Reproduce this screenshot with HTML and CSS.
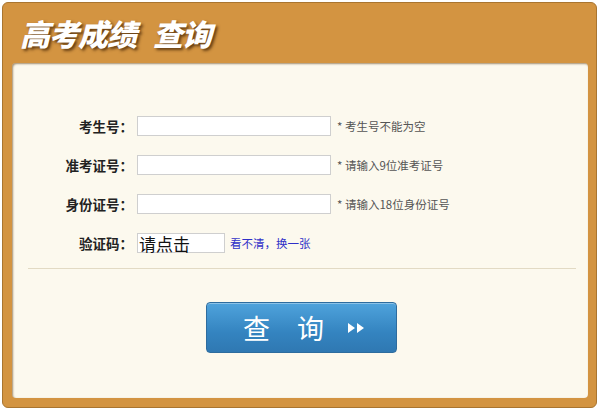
FILE: index.html
```html
<!doctype html>
<html lang="zh-CN">
<head>
  <meta charset="utf-8">
  <title>高考成绩查询</title>
  <link rel="stylesheet" href="styles.css">
</head>
<body>
  <!-- outer orange frame -->
  <div class="frame">
    <h1 class="title">高考成绩<span class="gap"></span>查询</h1>

    <div class="panel">
      <form class="query-form">
        <div class="row">
          <label class="label">考生号：</label>
          <input class="field" type="text">
          <span class="hint">* 考生号不能为空</span>
        </div>
        <div class="row">
          <label class="label">准考证号：</label>
          <input class="field" type="text">
          <span class="hint">* 请输入9位准考证号</span>
        </div>
        <div class="row">
          <label class="label">身份证号：</label>
          <input class="field" type="text">
          <span class="hint">* 请输入18位身份证号</span>
        </div>
        <div class="row">
          <label class="label">验证码：</label>
          <div class="captcha">请点击</div>
          <a class="refresh" href="#">看不清，换一张</a>
        </div>
      </form>

      <hr class="divider">

      <div class="actions">
        <button class="submit" type="button">
          <span>查</span><span>询</span>
          <svg class="arrows" width="20" height="12" viewBox="0 0 20 12">
            <path d="M2 1 L9 6 L2 11 Z" fill="#fff"/>
            <path d="M11 1 L18 6 L11 11 Z" fill="#fff"/>
          </svg>
        </button>
      </div>
    </div>
  </div>
</body>
</html>
```

FILE: styles.css
```css
/*----------------------------------------------
 * BASE
 *----------------------------------------------*/
html, body {
  margin: 0;
  padding: 0;
  background: #fff;
  font-family: "Noto Sans CJK SC", "Noto Sans", sans-serif;
}

/*----------------------------------------------
 * FRAME + HEADER
 *----------------------------------------------*/
.frame {
  margin: 2px 0 0 2px;
  width: 595px;
  height: 406px;
  box-sizing: border-box;
  background: #d39441;
  border: 1px solid #a97530;
  border-radius: 6px;
  padding: 0 8px 9px 9px;
  display: flex;
  flex-direction: column;
}

.title {
  margin: 0;
  height: 60px;
  padding-left: 8px;
  display: flex;
  align-items: center;
  color: #fff;
  font-size: 30px;
  font-weight: 900;
  font-style: italic;
  letter-spacing: -1px;
  text-shadow: 2px 2px 3px rgba(60, 30, 0, 0.75);
}

.title .gap {
  display: inline-block;
  width: 17px;
}

/*----------------------------------------------
 * PANEL
 *----------------------------------------------*/
.panel {
  flex: 1;
  background: #fcf9ee;
  border-radius: 4px;
  box-shadow: inset 1px 1px 2px rgba(90, 55, 10, 0.55);
  padding-top: 53px;
}

.query-form {
  display: flex;
  flex-direction: column;
  gap: 19px;
}

.row {
  display: flex;
  align-items: center;
  height: 20px;
}

.label {
  width: 121px;
  text-align: right;
  font-size: 13.5px;
  font-weight: 700;
  color: #222;
  margin-right: 4px;
}

.field {
  width: 194px;
  height: 20px;
  box-sizing: border-box;
  margin: 0;
  border: 1px solid #cfcfcf;
  background: #fff;
}

.hint {
  margin-left: 6px;
  font-size: 11.5px;
  color: #555;
}

.captcha {
  width: 88px;
  height: 20px;
  box-sizing: border-box;
  border: 1px solid #cfcfcf;
  background: #fff;
  font-size: 17px;
  line-height: 19px;
  color: #111;
  padding-left: 1px;
  white-space: nowrap;
}

.refresh {
  margin-left: 5px;
  font-size: 11.5px;
  color: #3030c8;
  text-decoration: none;
}

.divider {
  margin: 15px 12px 0 16px;
  border: 0;
  border-top: 1px solid #e2dac4;
}

/*----------------------------------------------
 * BUTTON
 *----------------------------------------------*/
.actions {
  display: flex;
  justify-content: center;
  padding-top: 33px;
  padding-left: 3px;
}

.submit {
  width: 191px;
  height: 51px;
  border: 1px solid #2e6c9e;
  border-radius: 4px;
  background: linear-gradient(#4fa3dc, #3484c0 60%, #2f78b2);
  box-shadow: inset 0 1px 0 rgba(255, 255, 255, 0.35);
  color: #fff;
  font-family: "Noto Sans CJK SC", sans-serif;
  font-size: 27px;
  display: flex;
  align-items: center;
  justify-content: center;
  gap: 27px;
  padding: 0 0 0 6px;
}

.arrows {
  margin-left: -5px;
}
```
